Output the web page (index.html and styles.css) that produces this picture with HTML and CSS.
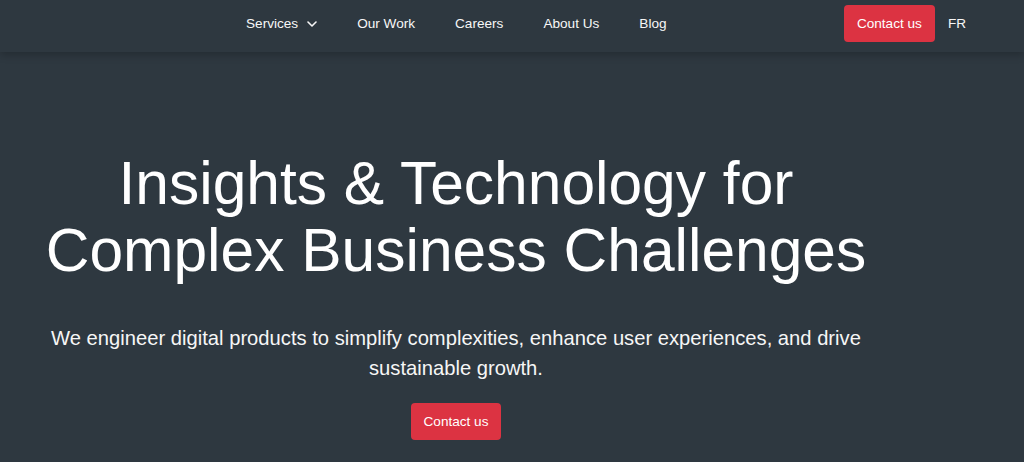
FILE: index.html
```html
<!doctype html>
<html lang="en">
  <head>
    <meta charset="UTF-8" />
    <meta name="viewport" content="width=device-width, initial-scale=1.0" />
    <title>Insights &amp; Technology</title>
    <link rel="stylesheet" href="styles.css">
  </head>
  <body>
    <header class="topbar">
      <nav class="menu">
        <a href="#" class="menu-item">Services
          <svg class="chev" width="10" height="6" viewBox="0 0 10 6" aria-hidden="true">
            <path d="M1 1l4 4 4-4" fill="none" stroke="currentColor" stroke-width="1.6" stroke-linecap="round" stroke-linejoin="round" />
          </svg>
        </a>
        <a href="#" class="menu-item">Our Work</a>
        <a href="#" class="menu-item">Careers</a>
        <a href="#" class="menu-item">About Us</a>
        <a href="#" class="menu-item">Blog</a>
      </nav>
      <div class="actions">
        <a href="#" class="btn btn-red">Contact us</a>
        <a href="#" class="lang">FR</a>
      </div>
    </header>

    <section class="hero">
      <div class="hero-col">
        <h1 class="hero-title">Insights &amp; Technology for Complex Business Challenges</h1>
        <p class="hero-lead">We engineer digital products to simplify complexities, enhance user experiences, and drive sustainable growth.</p>
        <a href="#" class="btn btn-red">Contact us</a>
      </div>
    </section>
  </body>
</html>
```

FILE: styles.css
```css
html,
body {
  margin: 0;
  padding: 0;
  height: 100%;
  background-color: #2e3840;
  color: #fff;
  font-family: "Liberation Sans", Arial, sans-serif;
  overflow: hidden;
}
a {
  color: inherit;
  text-decoration: none;
}
.topbar {
  position: relative;
  height: 46px;
  display: flex;
  align-items: center;
  padding: 0 58px 6px 226px;
  box-shadow: 0 3px 8px rgba(0, 0, 0, 0.22);
}
.menu {
  display: flex;
  align-items: center;
  flex: 1;
}
.menu-item {
  display: flex;
  align-items: center;
  gap: 9px;
  padding: 0 20px;
  font-size: 13.6px;
  color: #f7f7f7;
}
.chev {
  margin-top: 1px;
}
.actions {
  display: flex;
  align-items: center;
  gap: 13px;
}
.btn {
  display: inline-block;
  padding: 10px 13px;
  border-radius: 4px;
  font-size: 13.6px;
  line-height: 17px;
}
.btn-red {
  background-color: #dc3342;
  color: #fff;
}
.lang {
  font-size: 13.6px;
  color: #f7f7f7;
}
.hero {
  padding: 98px 0 0 44px;
}
.hero-col {
  width: 824px;
  text-align: center;
}
.hero-title {
  margin: 0;
  font-size: 60.5px;
  font-weight: 400;
  line-height: 67px;
}
.hero-lead {
  margin: 39px 0 20px;
  font-size: 20.2px;
  line-height: 30px;
  color: #f6f6f6;
}
```
